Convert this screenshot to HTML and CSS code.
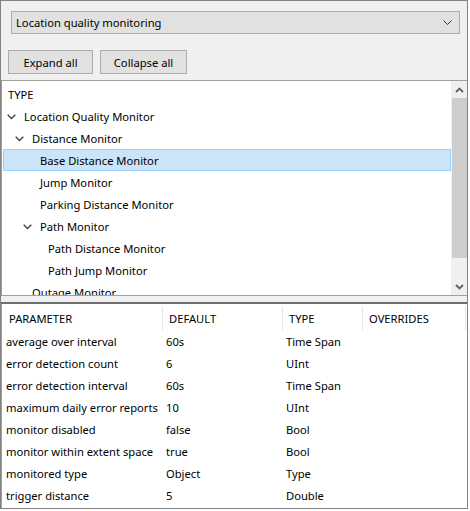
FILE: index.html
```html
<!DOCTYPE html>
<html lang="en">

<head>
    <meta charset="UTF-8">
    <title>Location quality monitoring</title>
    <link rel="stylesheet" href="styles.css">
</head>

<body>
    <div class="window">
        <div class="toolbar">
            <div class="select">
                <span>Location quality monitoring</span>
                <svg class="select-arrow" width="9" height="5" viewBox="0 0 9 5">
                    <polyline points="0.5,0.5 4.5,4.5 8.5,0.5" fill="none" stroke="#333" stroke-width="1" />
                </svg>
            </div>
            <div class="buttons">
                <button class="btn expand">Expand all</button>
                <button class="btn collapse">Collapse all</button>
            </div>
        </div>

        <div class="tree-panel">
            <div class="tree">
                <div class="tree-head">TYPE</div>
                <div class="node l0"><span class="exp"><svg width="9" height="6" viewBox="0 0 9 6"><polyline points="0.7,0.8 4.5,4.6 8.3,0.8" /></svg></span>Location Quality Monitor</div>
                <div class="node l1"><span class="exp"><svg width="9" height="6" viewBox="0 0 9 6"><polyline points="0.7,0.8 4.5,4.6 8.3,0.8" /></svg></span>Distance Monitor</div>
                <div class="node l2 selected"><span class="exp"></span>Base Distance Monitor</div>
                <div class="node l2"><span class="exp"></span>Jump Monitor</div>
                <div class="node l2"><span class="exp"></span>Parking Distance Monitor</div>
                <div class="node l2"><span class="exp"><svg width="9" height="6" viewBox="0 0 9 6"><polyline points="0.7,0.8 4.5,4.6 8.3,0.8" /></svg></span>Path Monitor</div>
                <div class="node l3"><span class="exp"></span>Path Distance Monitor</div>
                <div class="node l3"><span class="exp"></span>Path Jump Monitor</div>
                <div class="node l1"><span class="exp"></span>Outage Monitor</div>
            </div>
            <div class="scrollbar">
                <div class="sb-arrow">
                    <svg width="9" height="6" viewBox="0 0 9 6"><polyline points="1,5 4.5,1.5 8,5" /></svg>
                </div>
                <div class="sb-track">
                    <div class="sb-thumb"></div>
                </div>
                <div class="sb-arrow">
                    <svg width="9" height="6" viewBox="0 0 9 6"><polyline points="1,1 4.5,4.5 8,1" /></svg>
                </div>
            </div>
        </div>

        <div class="splitter"></div>

        <div class="grid">
            <div class="grid-row grid-head">
                <div class="cell">PARAMETER</div>
                <div class="cell">DEFAULT</div>
                <div class="cell">TYPE</div>
                <div class="cell">OVERRIDES</div>
            </div>
            <div class="grid-row">
                <div class="cell">average over interval</div>
                <div class="cell">60s</div>
                <div class="cell">Time Span</div>
                <div class="cell"></div>
            </div>
            <div class="grid-row">
                <div class="cell">error detection count</div>
                <div class="cell">6</div>
                <div class="cell">UInt</div>
                <div class="cell"></div>
            </div>
            <div class="grid-row">
                <div class="cell">error detection interval</div>
                <div class="cell">60s</div>
                <div class="cell">Time Span</div>
                <div class="cell"></div>
            </div>
            <div class="grid-row">
                <div class="cell">maximum daily error reports</div>
                <div class="cell">10</div>
                <div class="cell">UInt</div>
                <div class="cell"></div>
            </div>
            <div class="grid-row">
                <div class="cell">monitor disabled</div>
                <div class="cell">false</div>
                <div class="cell">Bool</div>
                <div class="cell"></div>
            </div>
            <div class="grid-row">
                <div class="cell">monitor within extent space</div>
                <div class="cell">true</div>
                <div class="cell">Bool</div>
                <div class="cell"></div>
            </div>
            <div class="grid-row">
                <div class="cell">monitored type</div>
                <div class="cell">Object</div>
                <div class="cell">Type</div>
                <div class="cell"></div>
            </div>
            <div class="grid-row">
                <div class="cell">trigger distance</div>
                <div class="cell">5</div>
                <div class="cell">Double</div>
                <div class="cell"></div>
            </div>
        </div>
    </div>
</body>

</html>
```

FILE: styles.css
```css
* {
    margin: 0;
    padding: 0;
    box-sizing: border-box;
}

body {
    font-family: 'Noto Sans', 'Open Sans', sans-serif;
    font-size: 11.2px;
    color: #000;
    background: white;
}

.window {
    width: 468px;
    height: 509px;
    border: 1px solid #828282;
    display: flex;
    flex-direction: column;
    overflow: hidden;
}

/* top bar */
.toolbar {
    background: #f0f0f0;
    padding: 10px 7px 6px 7px;
}

.select {
    margin-left: 3px;
    width: 449px;
    height: 23px;
    background: #e1e1e1;
    border: 1px solid #adadad;
    display: flex;
    align-items: center;
    justify-content: space-between;
    padding: 0 7px 0 4px;
}

.buttons {
    display: flex;
    gap: 7px;
    margin-top: 16px;
}

.btn {
    height: 24px;
    background: #e1e1e1;
    border: 1px solid #adadad;
    font-family: inherit;
    font-size: 11.2px;
    color: #000;
}

.btn.expand {
    width: 85px;
}

.btn.collapse {
    width: 87px;
}

/* tree */
.tree-panel {
    height: 216px;
    background: white;
    border-top: 1px solid #a0a0a0;
    border-left: 1px solid #a0a0a0;
    border-bottom: 1px solid #a0a0a0;
    display: flex;
}

.tree {
    flex: 1;
    overflow: hidden;
    padding-top: 2px;
}

.tree-head,
.node {
    height: 22px;
    line-height: 21px;
    padding-top: 1px;
    white-space: nowrap;
}

.tree-head {
    padding-left: 6px;
}

.node {
    display: flex;
    align-items: center;
}

.node.l0 { padding-left: 5px; }
.node.l1 { padding-left: 13px; }
.node.l2 { padding-left: 21px; }
.node.l3 { padding-left: 29px; }

.exp {
    width: 17px;
    display: flex;
    align-items: center;
}

.exp svg polyline {
    fill: none;
    stroke: #444;
    stroke-width: 1.4;
}

.node.selected {
    margin-left: 1px;
    padding-left: 19px;
    padding-top: 1px;
    background: #cce4f7;
    border: 1px solid #99d1ff;
    line-height: 19px;
}

.scrollbar {
    width: 16px;
    background: #f0f0f0;
    display: flex;
    flex-direction: column;
    padding-left: 1px;
}

.sb-arrow {
    height: 17px;
    display: flex;
    align-items: center;
    justify-content: center;
}

.sb-arrow polyline {
    fill: none;
    stroke: #606060;
    stroke-width: 1.8;
}

.sb-track {
    flex: 1;
}

.sb-thumb {
    height: 160px;
    background: #cdcdcd;
}

.splitter {
    height: 8px;
    background: #f0f0f0;
    border-bottom: 2px solid #6d6d6d;
}

/* parameter grid */
.grid {
    flex: 1;
    background: white;
    border-left: 1px solid #a0a0a0;
    padding-top: 2px;
}

.grid-row {
    display: grid;
    grid-template-columns: 161px 120px 80px 103px;
    height: 22px;
    line-height: 21px;
    white-space: nowrap;
}

.grid-row .cell {
    padding-left: 3px;
    padding-top: 1px;
}

.grid-row .cell:first-child {
    padding-left: 4px;
}

.grid-head {
    height: 24px;
    line-height: 23px;
}

.grid-head .cell {
    padding-left: 6px;
    border-right: 1px solid #e5e5e5;
}

.grid-head .cell:first-child {
    padding-left: 7px;
}
```
